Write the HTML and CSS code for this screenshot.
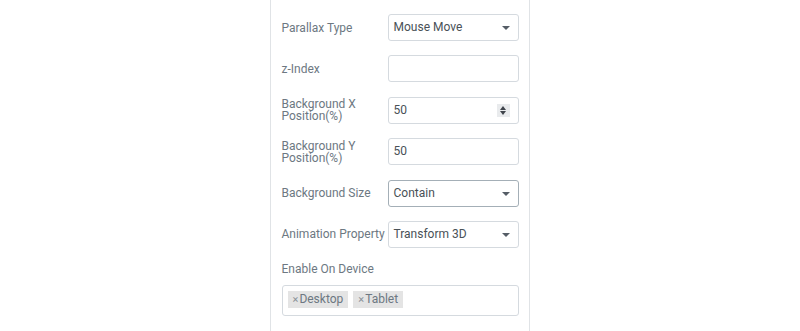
FILE: index.html
```html
<!DOCTYPE html>
<html lang="en">
<head>
    <meta charset="UTF-8">
    <title>Parallax Settings</title>
    <link rel="stylesheet" href="styles.css">
</head>
<body>
    <div class="panel">
        <div class="row">
            <label class="label">Parallax Type</label>
            <div class="field select">Mouse Move<span class="caret"></span></div>
        </div>
        <div class="row">
            <label class="label">z-Index</label>
            <div class="field"></div>
        </div>
        <div class="row">
            <label class="label two">Background X<br>Position(%)</label>
            <div class="field number">50<span class="spin"><i class="up"></i><i class="down"></i></span></div>
        </div>
        <div class="row">
            <label class="label two">Background Y<br>Position(%)</label>
            <div class="field">50</div>
        </div>
        <div class="row">
            <label class="label">Background Size</label>
            <div class="field select focused">Contain<span class="caret"></span></div>
        </div>
        <div class="row">
            <label class="label">Animation Property</label>
            <div class="field select">Transform 3D<span class="caret"></span></div>
        </div>
        <div class="block">
            <label class="label">Enable On Device</label>
            <div class="tags">
                <span class="tag"><span class="x">×</span>Desktop</span>
                <span class="tag"><span class="x">×</span>Tablet</span>
            </div>
        </div>
    </div>
</body>
</html>
```

FILE: styles.css
```css
* {
    box-sizing: border-box;
    font-family: Roboto, Arial, sans-serif;
}

html, body {
    margin: 0;
    padding: 0;
    background: #ffffff;
}

body {
    display: flex;
    justify-content: center;
    height: 331px;
    overflow: hidden;
}

.panel {
    width: 260px;
    margin-left: -1px;
    height: 100%;
    border-left: 1px solid #e0e3e6;
    border-right: 1px solid #e0e3e6;
    padding: 14px 10px 0 11px;
}

.row {
    display: flex;
    align-items: center;
    height: 27px;
    margin-bottom: 14.4px;
}

.label {
    width: 106px;
    flex-shrink: 0;
    font-size: 12px;
    color: #6d7882;
    line-height: 12px;
}

.field {
    position: relative;
    width: 131px;
    height: 27px;
    border: 1px solid #d5dadf;
    border-radius: 3px;
    font-size: 12px;
    color: #495157;
    line-height: 25px;
    padding-left: 5px;
}

.field.focused {
    border-color: #a4afb7;
}

.caret {
    position: absolute;
    right: 8px;
    top: 11px;
    width: 0;
    height: 0;
    border-left: 4px solid transparent;
    border-right: 4px solid transparent;
    border-top: 4px solid #555d66;
}

.spin {
    position: absolute;
    right: 8px;
    top: 6px;
    width: 13px;
    height: 13px;
    background: #e9ebed;
    display: flex;
    flex-direction: column;
    align-items: center;
    justify-content: center;
    gap: 1px;
}

.spin i {
    display: block;
    width: 0;
    height: 0;
    border-left: 3.5px solid transparent;
    border-right: 3.5px solid transparent;
}

.spin .up {
    border-bottom: 4px solid #3f444b;
}

.spin .down {
    border-top: 4px solid #3f444b;
}

.block {
    padding-top: 1px;
}

.block .label {
    display: block;
    width: auto;
    margin-bottom: 10px;
}

.tags {
    width: 237px;
    height: 31px;
    border: 1px solid #d5dadf;
    border-radius: 3px;
    padding: 5px 5px;
    display: flex;
    gap: 5px;
}

.tag {
    background: #e4e4e4;
    font-size: 12px;
    color: #6d7882;
    height: 17px;
    line-height: 17px;
    padding: 0 5px 0 5px;
}

.tag .x {
    color: #8a9299;
    font-size: 11px;
    margin-right: 1px;
}
```
